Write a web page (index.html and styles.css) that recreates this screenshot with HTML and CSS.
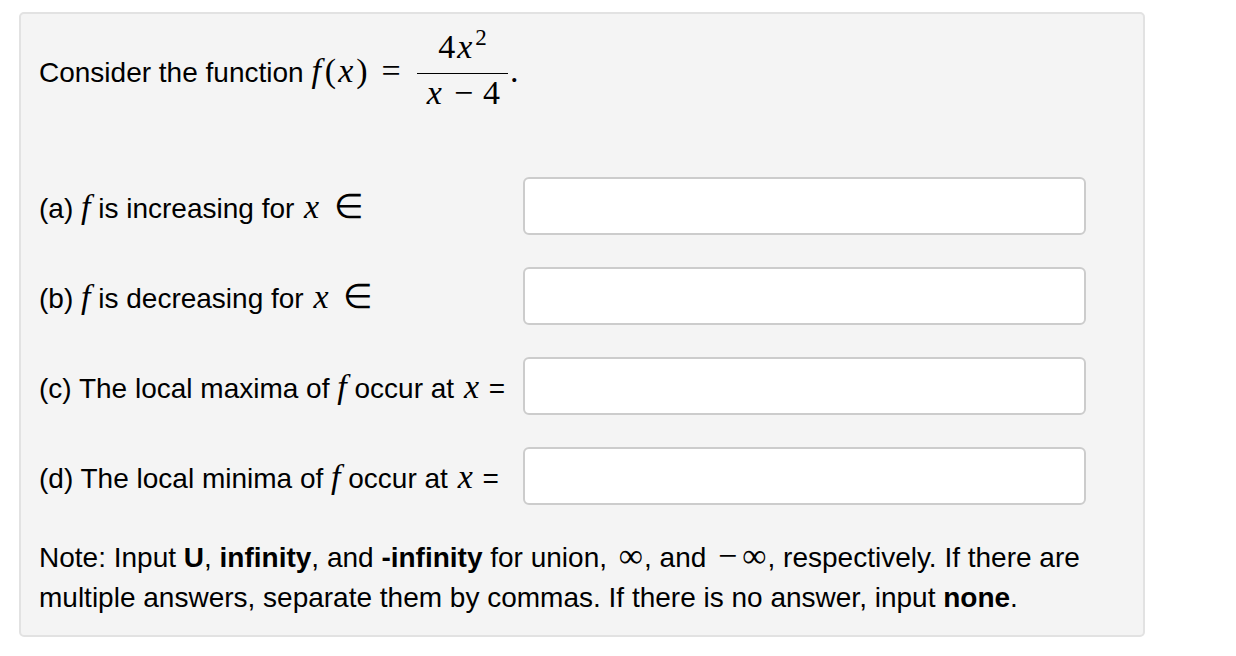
FILE: index.html
```html
<!DOCTYPE html>
<html>
<head>
<meta charset="utf-8">
<link rel="stylesheet" href="styles.css">
</head>
<body>
<div class="card">
  <div class="intro">Consider the function <span class="m"><i>f</i><span class="pl">(</span><i class="xv">x</i><span class="pr">)</span></span><span class="m rel">=</span><span class="frac"><span class="num m">4<i class="xv">x</i><sup>2</sup></span><span class="den m"><i class="xv">x</i><span class="bin">−</span>4</span></span><span class="m">.</span></div>
  <div class="rows">
    <div class="row">
      <div class="label">(a) <span class="m"><i>f</i></span> is increasing for <span class="m"><i class="xv">x</i> <span class="elem">∈</span></span></div>
      <input class="answer" type="text">
    </div>
    <div class="row">
      <div class="label">(b) <span class="m"><i>f</i></span> is decreasing for <span class="m"><i class="xv">x</i> <span class="elem">∈</span></span></div>
      <input class="answer" type="text">
    </div>
    <div class="row">
      <div class="label">(c) The local maxima of <span class="m"><i>f</i></span> occur at <span class="m"><i class="xv">x</i></span> =</div>
      <input class="answer" type="text">
    </div>
    <div class="row">
      <div class="label">(d) The local minima of <span class="m"><i>f</i></span> occur at <span class="m"><i class="xv">x</i></span> =</div>
      <input class="answer" type="text">
    </div>
  </div>
  <p class="note">Note: Input <b>U</b>, <b>infinity</b>, and <b>-infinity</b> for union, <span class="m inf">∞</span>, and <span class="m inf"><span class="neg">−</span>∞</span>, respectively. If there are multiple answers, separate them by commas. If there is no answer, input <b>none</b>.</p>
</div>
</body>
</html>
```
FILE: styles.css
```css
html, body {
  margin: 0;
  padding: 0;
  background: #ffffff;
}
body {
  font-family: "Liberation Sans", Arial, Helvetica, sans-serif;
  font-size: 28px;
  color: #000;
}
.card {
  margin: 12px 0 0 19px;
  width: 1086px;
  padding: 16px 18px 17px 18px;
  background: #f4f4f4;
  border: 2px solid #e2e2e2;
  border-radius: 5px;
}
.intro {
  line-height: 42px;
  white-space: nowrap;
}
.m {
  font-family: "Liberation Serif", "Times New Roman", serif;
  font-size: 34px;
}
.m i {
  font-style: italic;
}
.xv {
  margin: 0 2px;
}
.pl {
  margin-left: 4px;
}
.pr {
  margin-left: 1px;
}
.rel {
  margin: 0 14px 0 14px;
}
.frac {
  display: inline-flex;
  flex-direction: column;
  align-items: center;
  vertical-align: 24px;
  margin: 0 2px 0 2px;
}
.num {
  line-height: 33px;
  padding: 0 4px 10px;
  border-bottom: 1px solid #000;
  align-self: stretch;
  text-align: center;
}
.num sup {
  font-family: "Liberation Serif", serif;
  font-size: 23px;
  vertical-align: 13px;
  line-height: 0;
  margin-left: 1px;
}
.den {
  line-height: 33px;
  padding: 2px 8px 0;
}
.bin {
  margin: 0 10px;
}
.rows {
  margin-top: 68px;
  display: flex;
  flex-direction: column;
  gap: 32px;
}
.row {
  display: grid;
  grid-template-columns: 484px 563px;
  align-items: center;
}
.label {
  line-height: 42px;
  white-space: nowrap;
  padding-top: 4px;
}
.elem {
  margin-left: 4px;
}
.answer {
  box-sizing: border-box;
  width: 563px;
  height: 58px;
  margin: 0;
  background: #fff;
  border: 2px solid #cccccc;
  border-radius: 6px;
  font-size: 24px;
  padding: 0 10px;
}
.note {
  margin: 33px 0 0 0;
  line-height: 40px;
}
.inf {
  font-size: 34px;
  line-height: 0;
  margin: 0 1px 0 4px;
}
.neg {
  margin-right: 5px;
}
```
